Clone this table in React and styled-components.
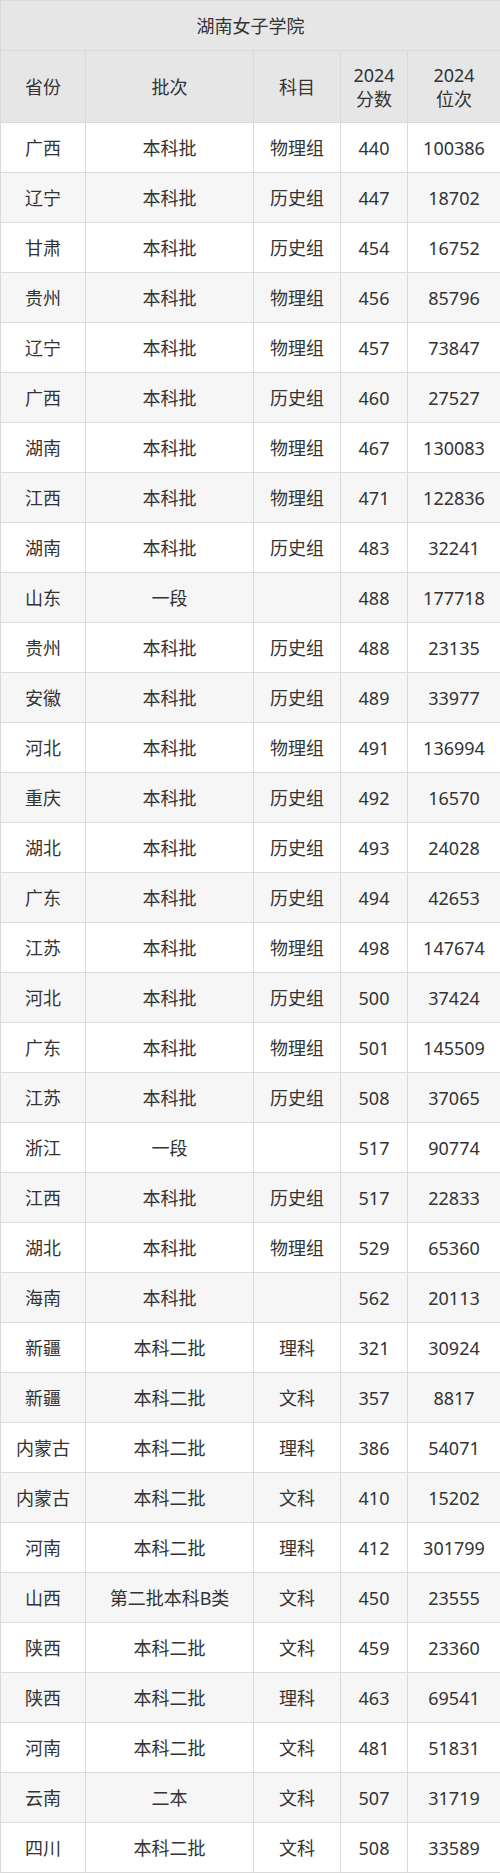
import styled, { createGlobalStyle } from 'styled-components';

const GlobalStyle = createGlobalStyle`
    body {
        margin: 0;
        background: #fff;
        font-family: "Noto Sans", "Noto Sans CJK SC", sans-serif;
        color: #333;
    }
`;

const rows = [
    ['广西', '本科批', '物理组', '440', '100386'],
    ['辽宁', '本科批', '历史组', '447', '18702'],
    ['甘肃', '本科批', '历史组', '454', '16752'],
    ['贵州', '本科批', '物理组', '456', '85796'],
    ['辽宁', '本科批', '物理组', '457', '73847'],
    ['广西', '本科批', '历史组', '460', '27527'],
    ['湖南', '本科批', '物理组', '467', '130083'],
    ['江西', '本科批', '物理组', '471', '122836'],
    ['湖南', '本科批', '历史组', '483', '32241'],
    ['山东', '一段', '', '488', '177718'],
    ['贵州', '本科批', '历史组', '488', '23135'],
    ['安徽', '本科批', '历史组', '489', '33977'],
    ['河北', '本科批', '物理组', '491', '136994'],
    ['重庆', '本科批', '历史组', '492', '16570'],
    ['湖北', '本科批', '历史组', '493', '24028'],
    ['广东', '本科批', '历史组', '494', '42653'],
    ['江苏', '本科批', '物理组', '498', '147674'],
    ['河北', '本科批', '历史组', '500', '37424'],
    ['广东', '本科批', '物理组', '501', '145509'],
    ['江苏', '本科批', '历史组', '508', '37065'],
    ['浙江', '一段', '', '517', '90774'],
    ['江西', '本科批', '历史组', '517', '22833'],
    ['湖北', '本科批', '物理组', '529', '65360'],
    ['海南', '本科批', '', '562', '20113'],
    ['新疆', '本科二批', '理科', '321', '30924'],
    ['新疆', '本科二批', '文科', '357', '8817'],
    ['内蒙古', '本科二批', '理科', '386', '54071'],
    ['内蒙古', '本科二批', '文科', '410', '15202'],
    ['河南', '本科二批', '理科', '412', '301799'],
    ['山西', '第二批本科B类', '文科', '450', '23555'],
    ['陕西', '本科二批', '文科', '459', '23360'],
    ['陕西', '本科二批', '理科', '463', '69541'],
    ['河南', '本科二批', '文科', '481', '51831'],
    ['云南', '二本', '文科', '507', '31719'],
    ['四川', '本科二批', '文科', '508', '33589'],
];

const widths = [85, 168, 87, 67, 93];

export default function App () {
    return (
        <>
            <GlobalStyle />
            <Table>
                <colgroup>
                    {widths.map((w, i) => <col key={i} style={{ width: w }} />)}
                </colgroup>
                <thead>
                    <TitleRow>
                        <th colSpan={5}>湖南女子学院</th>
                    </TitleRow>
                    <HeadRow>
                        <th>省份</th>
                        <th>批次</th>
                        <th>科目</th>
                        <th>2024<br />分数</th>
                        <th>2024<br />位次</th>
                    </HeadRow>
                </thead>
                <tbody>
                    {rows.map((r, index) => (
                        <Row key={index} striped={index % 2 === 1}>
                            {r.map((c, i) => <td key={i}>{c}</td>)}
                        </Row>
                    ))}
                </tbody>
            </Table>
        </>
    )
}

const Table = styled.table`
    width: 500px;
    table-layout: fixed;
    border-collapse: collapse;
    font-size: 18px;

    th, td {
        border: 1px solid #dadada;
        text-align: center;
        vertical-align: middle;
        padding: 0;
        font-weight: normal;
        line-height: 24px;
    }
`

const TitleRow = styled.tr`
    height: 50px;
    background: #e6e6e6;
`

const HeadRow = styled.tr`
    height: 72px;
    background: #e6e6e6;
`

const Row = styled.tr.withConfig({ shouldForwardProp: p => p !== 'striped' })`
    height: 50px;
    background: ${props => props.striped ? '#f6f6f6' : '#fff'};
`
